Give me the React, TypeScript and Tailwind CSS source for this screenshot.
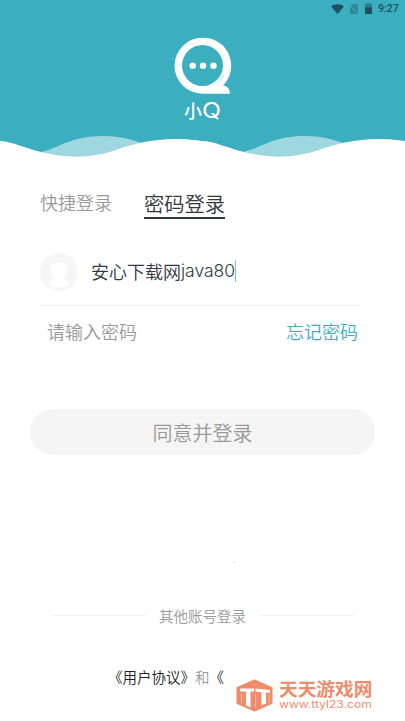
import { useState } from 'react'

const TABS = ['快捷登录', '密码登录']

function StatusBar() {
  return (
    <div className="flex h-[18px] items-center justify-end pr-[6px] text-[#1d515b]">
      <svg width="13" height="10" viewBox="0 0 13 10" fill="currentColor">
        <path d="M0 2.3C3.6-.5 9.4-.5 13 2.3L6.5 10z" />
      </svg>
      <svg className="ml-[6px] opacity-40" width="8" height="10" viewBox="0 0 8 10" fill="currentColor">
        <path d="M2.5 0H8v10H0V2.5z" />
        <path d="M0 2l8 8" stroke="#3baec0" strokeWidth="1" />
      </svg>
      <svg className="mb-px ml-[7px]" width="7" height="11" viewBox="0 0 7 11" fill="currentColor">
        <path d="M2 0h3v1h2v4H0V1h2z" opacity=".5" />
        <path d="M0 4.5h7V11H0z" />
      </svg>
      <span className="ml-[6px] w-[21px] whitespace-nowrap font-[Roboto] text-[10.5px] leading-[18px] font-medium">9:27</span>
    </div>
  )
}

function Logo() {
  return (
    <svg className="ml-[174px]" width="58" height="58" viewBox="0 0 58 58">
      <defs>
        <linearGradient id="shade" x1="0" y1="1" x2="1" y2="0">
          <stop offset="0" stopColor="#fff" />
          <stop offset="1" stopColor="#d3edf2" />
        </linearGradient>
      </defs>
      <path d="M28.5.7a28 28 0 1 0 0 56H56c0-5-2.7-7.6-7-8.2A28 28 0 0 0 28.5.7z" fill="#fff" />
      <circle cx="28.5" cy="28.5" r="20.5" fill="#3baec0" />
      <path d="M36 47.5c5-2.5 9-6 11.5-11l3 3C48.5 44 45 48 40 48.5z" fill="url(#shade)" />
      <circle cx="18.7" cy="28.8" r="3.2" fill="#fff" />
      <circle cx="29" cy="28.8" r="3.2" fill="#fff" />
      <circle cx="39.5" cy="28.8" r="3.2" fill="#fff" />
    </svg>
  )
}

function Wave() {
  return (
    <svg className="block" width="405" height="30" viewBox="0 0 405 30">
      <path
        d="M41 22C60 18 70 6 103 6C119 6 130 9 141 13L130 28H60zM243 22C262 18 272 6 305 6C321 6 332 9 343 13L332 28H262z"
        fill="#9fd7e0"
      />
      <path
        d="M0 11C13 12 25 18 41 22C67 28.5 91 28.5 116 20C133 14 151 9 176 9C187 9 194 10 203 11C216 12 228 18 244 22C270 28.5 294 28.5 319 20C336 14 354 9 379 9C390 9 397 10 405 11V30H0z"
        fill="#fff"
      />
    </svg>
  )
}

function Avatar() {
  return (
    <svg width="38" height="38" viewBox="0 0 38 38">
      <circle cx="19" cy="19" r="19" fill="#f6f6f6" />
      <path
        d="M19 9c5 0 8 3 8 8 0 4-2 6-4 7.5h-8C13 23 11 21 11 17c0-5 3-8 8-8zM8.5 31c1-4 5-6 10.5-6s9.5 2 10.5 6c-6 4.5-15 4.5-21 0z"
        fill="#fff"
      />
    </svg>
  )
}

function Watermark() {
  return (
    <div className="absolute top-[678px] left-[236px] flex text-[#ef8c6c]">
      <svg className="mt-[1px]" width="38" height="33" viewBox="0 0 38 33">
        <path d="M18.5 1.5L35.5 9v15L18.5 31.5 1.5 24V9z" fill="currentColor" stroke="currentColor" strokeWidth="2" strokeLinejoin="round" />
        <path d="M4 9.5h14v3h-3.500V28.500l-4.500-2V12.500H4z" fill="#fff" />
        <path d="M19.500 9.500l14.500 1.500v3l-4-.4V24.500l-4.500 2V13.200l-6-.7z" fill="#fff" />
        <path d="M5.500 15v9M19.500 15.500v13M33 16.500v7" stroke="#fff" strokeWidth=".8" opacity=".5" />
      </svg>
      <div className="ml-[5px]">
        <div className="h-[22px] text-[18.7px] leading-[20px] font-bold whitespace-nowrap">天天游戏网</div>
        <div className="h-[12px] w-[78px] origin-left scale-x-[1.21] font-[Inter] text-[10px] leading-[9px] font-normal whitespace-nowrap">
          www.ttyl23.com
        </div>
      </div>
    </div>
  )
}

export default function App() {
  const [tab, setTab] = useState(1)

  return (
    <div className="relative h-[721px] w-[405px] overflow-hidden bg-white font-['Noto_Sans_CJK_SC',sans-serif] font-[350] text-[#333740]">
      <header className="h-[160px] bg-[#3baec0]">
        <StatusBar />
        <div className="h-[112px] pt-[19px]">
          <Logo />
          <div className="mt-[4px] ml-[184px] flex h-[22px] items-center text-white">
            <span className="text-[18px] leading-[22px] font-medium">小</span>
            <span className="origin-left scale-x-[1.13] font-[Inter] text-[22px] leading-[22px] font-normal">Q</span>
          </div>
        </div>
        <Wave />
      </header>

      <div className="flex h-[59px] items-end pl-[40px]">
        {TABS.map((name, i) => (
          <button
            key={name}
            onClick={() => setTab(i)}
            className={
              i === tab
                ? 'ml-[32px] h-[31px] border-b-2 border-[#33363c] text-[20.3px] leading-[31px]'
                : 'h-[31px] text-[18px] leading-[28px] text-[#999]'
            }
          >
            <span className={i === tab ? 'block h-[29px]' : 'block h-[31px]'}>{name}</span>
          </button>
        ))}
      </div>

      <div className="mt-[34px] mr-[45px] ml-[40px] flex h-[53px] border-b border-[#eee]">
        <Avatar />
        <div className="ml-[13px] flex h-[36px] items-center text-[18px]">
          安心下载网<span className="pt-px font-[Inter] text-[17.5px] font-light">java80</span>
          <span className="h-[22px] w-px bg-[#75c9c9]" />
        </div>
      </div>
      <div className="mx-[47px] flex h-[60px] justify-between border-b border-[#fafafa] text-[18px] leading-[51px]">
        <span className="text-[#999]">请输入密码</span>
        <span className="text-[#3baec0]">忘记密码</span>
      </div>

      <button className="mt-[43px] ml-[30px] block h-[46px] w-[345px] rounded-full bg-[#f5f5f5] text-[20px] text-[#999]">
        <span className="block pt-px">同意并登录</span>
      </button>

      <div className="mt-[106px] ml-[233px] size-[2px] rounded-full bg-[#e5e7c8]" />

      <div className="mx-[51px] mt-[40px] flex h-[24px] items-center gap-[13px] text-[14.5px] text-[#999]">
        <div className="h-px flex-1 bg-[#f1f1f1]" />
        <span className="pt-px">其他账号登录</span>
        <div className="h-px flex-1 bg-[#f1f1f1]" />
      </div>
      <p className="mt-[39px] ml-[108px] text-[14.5px] leading-[22px] whitespace-nowrap text-[#1c1e24]">
        《用户协议》<span className="text-[#999]">和</span>《
      </p>

      <Watermark />
    </div>
  )
}
